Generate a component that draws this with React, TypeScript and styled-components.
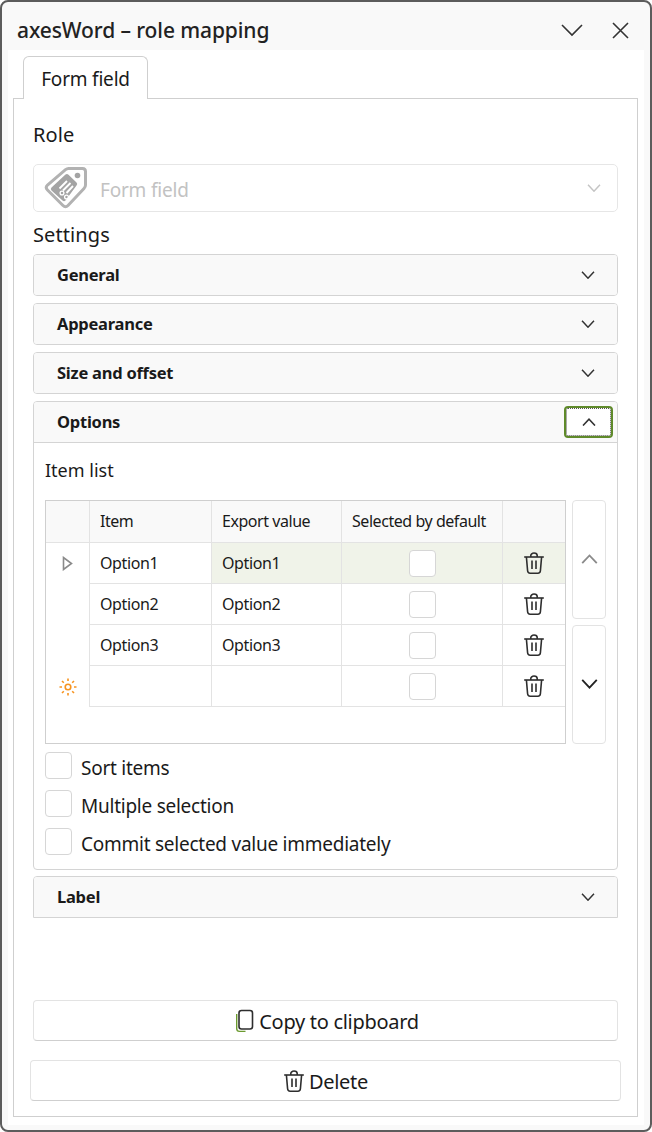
import React from 'react'
import styled, { createGlobalStyle } from 'styled-components'

const FONT = '"Noto Sans", "Open Sans", "Liberation Sans", sans-serif'

const GlobalStyle = createGlobalStyle`
  html, body { margin: 0; padding: 0; height: 100%; background: #fff; }
  #root { height: 100%; }
  * { box-sizing: border-box; }
`

const TrashIcon = ({ size = 22 }: { size?: number }): JSX.Element => (
  <svg width={size} height={size} viewBox="0 0 22 22" fill="none" stroke="#2e2e2e" strokeWidth="1.6">
    <path d="M1.2 5h19.600" />
    <path d="M7.800 5V3.600C7.800 2.200 9.200 1 11 1s3.200 1.200 3.200 2.600V5" />
    <path d="M3.400 5l1.200 13.800c.1 1.400 1.100 2.400 2.500 2.400h7.800c1.400 0 2.400-1 2.500-2.400L18.600 5" />
    <path d="M9 8.500v8.500M13 8.500v8.500" />
  </svg>
)

const Chevron = ({ up, color = '#333', w = 14 }: { up?: boolean, color?: string, w?: number }): JSX.Element => (
  <svg width={w} height={w * 0.6} viewBox="0 0 14 8.4" fill="none" stroke={color} strokeWidth="1.5">
    <path d={up ? 'M1 7.600l6-6.400 6 6.400' : 'M1 .8l6 6.400 6-6.400'} />
  </svg>
)

const TagIcon = (): JSX.Element => (
  <svg width="44" height="44" viewBox="0 0 44 44" fill="none">
    <path d="M24.500 2.500H38.500Q41.500 2.500 41.500 5.500V19Q41.500 21 40 22.500L24 39.500Q21.500 42 19 39.500L3.500 24Q1 21.500 3.500 19L21.500 3.700Q23 2.500 24.500 2.500Z" stroke="#b2b2b2" strokeWidth="3" fill="#fff" />
    <circle cx="33.500" cy="9.500" r="2.800" fill="#a4a4a4" />
    <path d="M7.500 21.500L21.500 8.500Q23 7.200 24.500 8.700L32.500 16.500Q34 18 32.500 19.500L21.500 34.500Q20 36 18.500 34.500L7.500 24.500Q6 23 7.500 21.500Z" fill="#a4a4a4" />
    <path d="M15.500 22.500L23 15M19 24.500L26.500 17M22.500 27L29 20" stroke="#fff" strokeWidth="1.900" />
    <circle cx="18" cy="27" r="1.900" stroke="#fff" strokeWidth="1.300" />
    <circle cx="22.500" cy="31" r="1.900" stroke="#fff" strokeWidth="1.300" />
  </svg>
)

const SunIcon = (): JSX.Element => (
  <svg width="18" height="18" viewBox="0 0 18 18" fill="none" stroke="#f7931e" strokeWidth="1.600">
    <circle cx="9" cy="9" r="2.800" />
    <path d="M9 .5v2.500M9 15v2.500M.5 9H3M15 9h2.500M3 3l1.800 1.800M13.200 13.200L15 15M15 3l-1.800 1.800M4.800 13.200L3 15" />
  </svg>
)

const ArrowRowIcon = (): JSX.Element => (
  <svg width="11" height="15" viewBox="0 0 11 15" fill="none" stroke="#8a8a8a" strokeWidth="1.600">
    <path d="M1.500 1.500v12l8-6z" />
  </svg>
)

const CopyIcon = (): JSX.Element => (
  <svg width="24" height="24" viewBox="0 0 24 24" fill="none">
    <path d="M4.700 5v14.500C4.700 21.300 5.800 22.400 7.500 22.400h6" stroke="#6b9a2f" strokeWidth="1.400" />
    <rect x="7" y="1.500" width="13.500" height="18.500" rx="2.500" stroke="#2e2e2e" strokeWidth="1.600" />
  </svg>
)

const rows = [
  { item: 'Option1', value: 'Option1', current: true, selected: true },
  { item: 'Option2', value: 'Option2' },
  { item: 'Option3', value: 'Option3' },
  { item: '', value: '', isNew: true }
]

const App = (): JSX.Element => {
  return (
    <Window>
      <GlobalStyle />
      <TitleBar>
        <Title>axesWord – role mapping</Title>
        <WindowButtons>
          <svg width="22" height="14" viewBox="0 0 22 14" fill="none" stroke="#333" strokeWidth="1.600"><path d="M1 2l10 10L21 2" /></svg>
          <svg width="17" height="17" viewBox="0 0 17 17" fill="none" stroke="#333" strokeWidth="1.600"><path d="M1 1l15 15M16 1L1 16" /></svg>
        </WindowButtons>
      </TitleBar>
      <Body>
        <TabStrip>
          <Tab>Form field</Tab>
        </TabStrip>
        <Panel>
          <SectionLabel>Role</SectionLabel>
          <Select>
            <TagIcon />
            <SelectText>Form field</SelectText>
            <Chevron color="#c4c4c4" />
          </Select>
          <SettingsLabel>Settings</SettingsLabel>
          <Accordion>
            <AccordionItem>
              <AccordionHeader><HeaderLabel>General</HeaderLabel><Chevron /></AccordionHeader>
            </AccordionItem>
            <AccordionItem>
              <AccordionHeader><HeaderLabel>Appearance</HeaderLabel><Chevron /></AccordionHeader>
            </AccordionItem>
            <AccordionItem>
              <AccordionHeader><HeaderLabel>Size and offset</HeaderLabel><Chevron /></AccordionHeader>
            </AccordionItem>
            <AccordionItem>
              <AccordionHeader open>
                <HeaderLabel>Options</HeaderLabel>
                <ToggleButton><Chevron up /></ToggleButton>
              </AccordionHeader>
              <AccordionBody>
                <ItemListLabel>Item list</ItemListLabel>
                <GridRow>
                  <Grid>
                    <GridLine>
                      <HeaderStub />
                      <HeaderCell w={122}>Item</HeaderCell>
                      <HeaderCell w={130}>Export value</HeaderCell>
                      <HeaderCell w={161}>Selected by default</HeaderCell>
                      <HeaderCell w={62} />
                    </GridLine>
                    {rows.map((row, i) => (
                      <GridLine key={i}>
                        <RowStub>
                          {row.current && <ArrowRowIcon />}
                          {row.isNew && <SunIcon />}
                        </RowStub>
                        <Cell w={122}>{row.item}</Cell>
                        <Cell w={130} selected={row.selected}>{row.value}</Cell>
                        <Cell w={161} selected={row.selected} center><CheckBox /></Cell>
                        <Cell w={62} selected={row.selected} center><TrashIcon /></Cell>
                      </GridLine>
                    ))}
                  </Grid>
                  <MoveButtons>
                    <MoveButton><Chevron up color="#8a8a8a" w={17} /></MoveButton>
                    <MoveButton><Chevron color="#222" w={17} /></MoveButton>
                  </MoveButtons>
                </GridRow>
                <CheckList>
                  <CheckRow><CheckBox /><CheckLabel>Sort items</CheckLabel></CheckRow>
                  <CheckRow><CheckBox /><CheckLabel>Multiple selection</CheckLabel></CheckRow>
                  <CheckRow><CheckBox /><CheckLabel>Commit selected value immediately</CheckLabel></CheckRow>
                </CheckList>
              </AccordionBody>
            </AccordionItem>
            <ClippedItem>
              <AccordionHeader><HeaderLabel>Label</HeaderLabel><Chevron /></AccordionHeader>
            </ClippedItem>
          </Accordion>
          <Spacer />
          <CopyButton><CopyIcon /><ButtonLabel>Copy to clipboard</ButtonLabel></CopyButton>
          <DeleteButton><TrashIcon /><ButtonLabel>Delete</ButtonLabel></DeleteButton>
        </Panel>
      </Body>
    </Window>
  )
}

export default App

const Window = styled.div`
  height: 1132px;
  width: 652px;
  border: 2px solid #5c5c5c;
  border-radius: 8px;
  background: #f9f9f9;
  font-family: ${FONT};
  color: #1a1a1a;
  display: flex;
  flex-direction: column;
  overflow: hidden;
`

const TitleBar = styled.div`
  height: 48px;
  flex: none;
  display: flex;
  align-items: center;
  justify-content: space-between;
  padding: 8px 21px 0 15px;
`

const Title = styled.div`
  font-size: 21px;
  font-weight: 500;
  letter-spacing: -0.1px;
  color: #222;
`

const WindowButtons = styled.div`
  display: flex;
  align-items: center;
  gap: 29px;
`

const Body = styled.div`
  flex: 1;
  margin: 0 6px 5px 6px;
  background: #fff;
  padding: 6px 0 8px 5px;
  display: flex;
  flex-direction: column;
`

const TabStrip = styled.div`
  height: 43px;
  flex: none;
  padding-left: 10px;
  margin-bottom: -1px;
  position: relative;
  z-index: 1;
`

const Tab = styled.div`
  width: 125px;
  height: 43px;
  background: #fff;
  border: 1px solid #cfcfcf;
  border-bottom: none;
  border-radius: 6px 6px 0 0;
  font-size: 19px;
  padding-top: 2px;
  display: flex;
  align-items: center;
  justify-content: center;
  letter-spacing: -0.2px;
`

const Panel = styled.div`
  flex: 1;
  width: 625px;
  border: 1px solid #cfcfcf;
  padding: 19px 19px 15px 19px;
  display: flex;
  flex-direction: column;
`

const SectionLabel = styled.div`
  height: 34px;
  font-size: 20px;
  line-height: 34px;
  letter-spacing: 0.1px;
  margin-bottom: 12px;
`

const SettingsLabel = styled(SectionLabel)`
  height: 30px;
  line-height: 46px;
  margin: 0 0 12px;
`

const Select = styled.div`
  width: 585px;
  height: 48px;
  flex: none;
  border: 1px solid #e6e6e6;
  border-radius: 5px;
  display: flex;
  align-items: center;
  padding: 0 16px 0 10px;
  color: #c2c2c2;
`

const SelectText = styled.span`
  flex: 1;
  font-size: 19px;
  line-height: 30px;
  padding-top: 4px;
  letter-spacing: -0.2px;
  margin-left: 12px;
`

const Accordion = styled.div`
  display: flex;
  flex-direction: column;
  gap: 7px;
`

const AccordionItem = styled.div`
  border: 1px solid #d4d4d4;
  border-radius: 4px;
  overflow: hidden;
`

const ClippedItem = styled(AccordionItem)`
  border-radius: 4px 4px 0 0;
  margin-top: -1px;
`

const AccordionHeader = styled.div<{ open?: boolean }>`
  height: 40px;
  background: #f9f9f9;
  padding: 0 22px 0 23px;
  display: flex;
  align-items: center;
  justify-content: space-between;
  ${({ open }) => open && `
    height: 41px;
    padding-right: 4px;
    border-bottom: 1px solid #d4d4d4;
  `}
`

const HeaderLabel = styled.span`
  font-size: 16.5px;
  line-height: 24px;
  font-weight: 700;
  letter-spacing: -0.25px;
`

const ToggleButton = styled.div`
  width: 49px;
  height: 32px;
  background: #fff;
  border: 2px solid #5f8a2a;
  border-radius: 4px;
  outline: 1px dotted #555;
  outline-offset: -3px;
  display: flex;
  align-items: center;
  justify-content: center;
`

const AccordionBody = styled.div`
  padding: 11px 11px 14px 11px;
`

const ItemListLabel = styled.div`
  font-size: 18px;
  line-height: 32px;
  margin-bottom: 14px;
`

const GridRow = styled.div`
  display: flex;
  gap: 6px;
`

const Grid = styled.div`
  width: 521px;
  height: 244px;
  border: 1px solid #cfcfcf;
  display: flex;
  flex-direction: column;
`

const GridLine = styled.div`
  display: flex;
  height: 41px;
  flex: none;
  &:first-child { height: 42px; }
`

const HeaderStub = styled.div`
  width: 44px;
  flex: none;
  background: #f9f9f9;
  border-right: 1px solid #e3e3e3;
  border-bottom: 1px solid #e3e3e3;
`

const RowStub = styled.div`
  width: 44px;
  flex: none;
  border-right: 1px solid #e3e3e3;
  display: flex;
  align-items: center;
  justify-content: center;
`

const HeaderCell = styled.div<{ w: number }>`
  width: ${({ w }) => w}px;
  flex: none;
  background: #f9f9f9;
  border-right: 1px solid #e3e3e3;
  border-bottom: 1px solid #e3e3e3;
  display: flex;
  align-items: center;
  padding: 0 0 2px 10px;
  font-size: 16px;
  letter-spacing: -0.45px;
  &:last-child { border-right: none; }
`

const Cell = styled.div<{ w: number, selected?: boolean, center?: boolean }>`
  width: ${({ w }) => w}px;
  flex: none;
  background: ${({ selected }) => selected ? '#f0f3e9' : '#fff'};
  border-right: 1px solid #e3e3e3;
  border-bottom: 1px solid #e3e3e3;
  display: flex;
  align-items: center;
  justify-content: ${({ center }) => center ? 'center' : 'flex-start'};
  padding-left: ${({ center }) => center ? 0 : 10}px;
  font-size: 16px;
  letter-spacing: -0.4px;
  &:last-child { border-right: none; }
`

const CheckBox = styled.div`
  width: 27px;
  height: 27px;
  flex: none;
  background: #fff;
  border: 1px solid #d6d6d6;
  border-radius: 4px;
`

const MoveButtons = styled.div`
  display: flex;
  flex-direction: column;
  gap: 6px;
  width: 34px;
`

const MoveButton = styled.div`
  flex: 1;
  border: 1px solid #e3e3e3;
  border-radius: 4px;
  display: flex;
  align-items: center;
  justify-content: center;
`

const CheckList = styled.div`
  margin-top: 8px;
  display: flex;
  flex-direction: column;
  gap: 11px;
`

const CheckRow = styled.div`
  display: flex;
  align-items: center;
  gap: 9px;
  height: 27px;
`

const CheckLabel = styled.span`
  font-size: 19px;
  line-height: 27px;
  padding-top: 6px;
  letter-spacing: -0.25px;
`

const Spacer = styled.div`
  flex: 1;
`

const ActionButton = styled.div`
  height: 41px;
  flex: none;
  background: #fff;
  border: 1px solid #e3e3e3;
  border-bottom-color: #cfcfcf;
  border-radius: 4px;
  display: flex;
  align-items: center;
  justify-content: center;
`

const ButtonLabel = styled.span`
  font-size: 20px;
  line-height: 30px;
  padding-top: 2px;
  letter-spacing: -0.3px;
`

const CopyButton = styled(ActionButton)`
  width: 585px;
  gap: 3px;
`

const DeleteButton = styled(ActionButton)`
  width: 591px;
  gap: 4px;
  margin: 19px -3px 0;
`
